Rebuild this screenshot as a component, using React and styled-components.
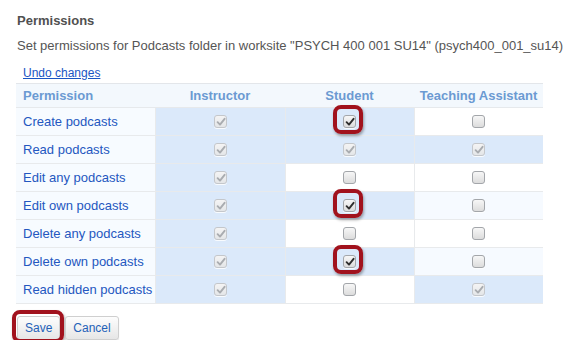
import React from "react";
import styled, { createGlobalStyle, css } from "styled-components";

const Global = createGlobalStyle`
  html, body { margin: 0; padding: 0; background: #fff; }
  body { font-family: "Liberation Sans", Arial, sans-serif; }
`;

const Page = styled.div`
  padding: 12px 0 0 16px;
  width: 577px;
  box-sizing: border-box;
`;

const Title = styled.h2`
  margin: 0 0 0 1px;
  font-size: 13px;
  line-height: 17px;
  font-weight: bold;
  color: #505050;
`;

const Subtitle = styled.p`
  margin: 8px 0 0 1px;
  font-size: 13px;
  line-height: 17px;
  color: #555;
  white-space: nowrap;
`;

const UndoLink = styled.a`
  display: block;
  margin: 12px 0 0 7px;
  font-size: 12px;
  line-height: 14px;
  height: 17px;
  color: #1a55c4;
  text-decoration: underline;
`;

const Table = styled.table`
  border-collapse: collapse;
  width: 527px;
  table-layout: fixed;
  border-top: 1px solid #e3e6ea;
`;

const HeadCell = styled.th`
  height: 23px;
  padding: 0;
  background: #f3f8fd;
  color: #6b9ad2;
  font-size: 13px;
  font-weight: bold;
  text-align: ${(p) => (p.$left ? "left" : "center")};
  padding-left: ${(p) => (p.$left ? "7px" : "0")};
  border-bottom: 1px solid #e6e9ec;
`;

const LabelCell = styled.td`
  height: 27px;
  padding: 0 0 0 7px;
  background: #f7fbff;
  color: #2457c0;
  font-size: 13px;
  border: 1px solid #e8eaec;
  border-left: none;
  white-space: nowrap;
`;

const toneBg = {
  blue: "#dbe9fa",
  light: "#f6faff",
  white: "#ffffff",
};

const BoxCell = styled.td`
  height: 27px;
  padding: 0;
  text-align: center;
  vertical-align: middle;
  background: ${(p) => toneBg[p.$tone]};
  border: 1px solid #e8eaec;
  ${(p) => p.$last && css`border-right: none;`}
`;

const BoxWrap = styled.span`
  position: relative;
  display: inline-block;
  width: 13px;
  height: 13px;
  vertical-align: middle;
  margin-top: -2px;
`;

const Box = styled.span`
  display: block;
  box-sizing: border-box;
  width: 13px;
  height: 13px;
  border-radius: 3px;
  border: 1px solid ${(p) => (p.$disabled ? "#c4c7cb" : "#a3a6aa")};
  background: ${(p) =>
    p.$disabled
      ? "linear-gradient(#f4f4f4, #e4e6e8)"
      : "linear-gradient(#f7f7f7, #dcdcdc)"};
  box-shadow: 0 1px 0 rgba(255, 255, 255, 0.8);
  svg { display: block; margin: 1px 0 0 1px; }
`;

const Highlight = styled.span`
  position: absolute;
  box-sizing: border-box;
  left: -10px;
  top: -10px;
  width: 30px;
  height: 29px;
  border: 4px solid #a1121d;
  border-radius: 8px;
  box-shadow: 1px 2px 3px rgba(0, 0, 0, 0.35);
  pointer-events: none;
`;

const Check = ({ color }) => (
  <svg width="10" height="10" viewBox="0 0 10 10">
    <path d="M1.6 5.2 L4 7.6 L8.6 1.8" fill="none" stroke={color} strokeWidth="1.9" strokeLinecap="round" strokeLinejoin="round" />
  </svg>
);

const Checkbox = ({ state, hl }) => (
  <BoxWrap>
    <Box $disabled={state === "d"}>
      {state === "d" && <Check color="#a9acb0" />}
      {state === "c" && <Check color="#2e2e2e" />}
    </Box>
    {hl && <Highlight />}
  </BoxWrap>
);

const ButtonRow = styled.div`
  display: flex;
  gap: 5px;
  margin: 12px 0 0 1px;
`;

const ButtonWrap = styled.span`
  position: relative;
  display: inline-block;
`;

const Button = styled.button`
  height: 24px;
  padding: 0 7px;
  font-family: "Liberation Sans", Arial, sans-serif;
  font-size: 12px;
  color: #2361b8;
  background: linear-gradient(#fdfdfd, #e6e6e6);
  border: 1px solid #cfcfcf;
  border-radius: 3px;
  box-shadow: 0 1px 1px rgba(0,0,0,0.12);
`;

const BtnHighlight = styled.span`
  position: absolute;
  left: -5px;
  top: -6px;
  right: -4px;
  bottom: -3px;
  border: 4px solid #a1121d;
  border-radius: 8px;
  box-shadow: 1px 2px 3px rgba(0, 0, 0, 0.35);
  pointer-events: none;
`;

// state: d = disabled checked, c = checked, u = unchecked
const rows = [
  { label: "Create podcasts", cells: [["d", "blue"], ["c", "blue", true], ["u", "white"]] },
  { label: "Read podcasts", cells: [["d", "blue"], ["d", "blue"], ["d", "blue"]] },
  { label: "Edit any podcasts", cells: [["d", "blue"], ["u", "white"], ["u", "white"]] },
  { label: "Edit own podcasts", cells: [["d", "blue"], ["c", "blue", true], ["u", "light"]] },
  { label: "Delete any podcasts", cells: [["d", "blue"], ["u", "white"], ["u", "white"]] },
  { label: "Delete own podcasts", cells: [["d", "blue"], ["c", "blue", true], ["u", "light"]] },
  { label: "Read hidden podcasts", cells: [["d", "blue"], ["u", "white"], ["d", "blue"]] },
];

export default function App() {
  return (
    <>
      <Global />
      <Page>
        <Title>Permissions</Title>
        <Subtitle>
          Set permissions for Podcasts folder in worksite "PSYCH 400 001 SU14" (psych400_001_su14)
        </Subtitle>
        <UndoLink href="#">Undo changes</UndoLink>
        <Table>
          <colgroup>
            <col style={{ width: 139 }} />
            <col style={{ width: 130 }} />
            <col style={{ width: 129 }} />
            <col style={{ width: 129 }} />
          </colgroup>
          <thead>
            <tr>
              <HeadCell $left>Permission</HeadCell>
              <HeadCell>Instructor</HeadCell>
              <HeadCell>Student</HeadCell>
              <HeadCell>Teaching Assistant</HeadCell>
            </tr>
          </thead>
          <tbody>
            {rows.map((r) => (
              <tr key={r.label}>
                <LabelCell>{r.label}</LabelCell>
                {r.cells.map(([s, tone, hl], i) => (
                  <BoxCell key={i} $tone={tone} $last={i === 2}>
                    <Checkbox state={s} hl={hl} />
                  </BoxCell>
                ))}
              </tr>
            ))}
          </tbody>
        </Table>
        <ButtonRow>
          <ButtonWrap>
            <Button>Save</Button>
            <BtnHighlight />
          </ButtonWrap>
          <ButtonWrap>
            <Button>Cancel</Button>
          </ButtonWrap>
        </ButtonRow>
      </Page>
    </>
  );
}
